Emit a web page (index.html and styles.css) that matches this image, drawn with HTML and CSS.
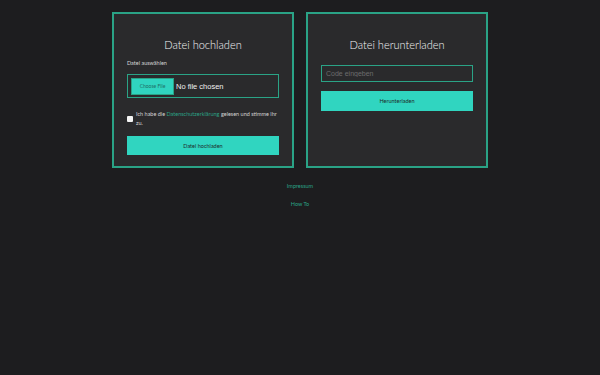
FILE: index.html
```html
<!DOCTYPE html>
<html lang="de">
<head>
<meta charset="utf-8">
<title>Datei teilen</title>
<link rel="stylesheet" href="styles.css">
</head>
<body>
<main class="page">
  <div class="cards">
    <section class="card">
      <h2 class="card-title">Datei hochladen</h2>
      <label class="field-label" for="file">Datei auswählen</label>
      <div class="file-box">
        <input class="file-input" id="file" type="file">
      </div>
      <div class="consent">
        <input class="check" type="checkbox" id="consent">
        <label for="consent">Ich habe die <a href="#" class="link">Datenschutzerklärung</a> gelesen und stimme ihr zu.</label>
      </div>
      <button class="btn btn-upload">Datei hochladen</button>
    </section>
    <section class="card">
      <h2 class="card-title">Datei herunterladen</h2>
      <input class="code-input" type="text" placeholder="Code eingeben">
      <button class="btn btn-download">Herunterladen</button>
    </section>
  </div>
  <nav class="footer">
    <a href="#" class="footer-link">Impressum</a>
    <a href="#" class="footer-link">How To</a>
  </nav>
</main>
</body>
</html>
```

FILE: styles.css
```css
* { box-sizing: border-box; }
html, body { margin: 0; padding: 0; }
body {
  background: #1d1d1f;
  font-family: "Lato", "Noto Sans", sans-serif;
  color: #e4e4e4;
  width: 600px;
  height: 375px;
}
.page {
  display: flex;
  flex-direction: column;
  align-items: center;
  padding-top: 12px;
}
.cards {
  display: flex;
  gap: 12px;
  align-items: stretch;
}
.card {
  width: 182px;
  background: #2a2a2c;
  border: 2px solid #2aa386;
  padding: 24px 13px 11px;
  display: flex;
  flex-direction: column;
}
.card-title {
  margin: 0;
  font-size: 11px;
  line-height: 14px;
  font-weight: 300;
  text-align: center;
  color: #f4f4f4;
}
.field-label {
  margin-top: 7px;
  font-size: 5.5px;
  line-height: 8px;
  color: #d4d4d4;
}
.file-box {
  margin-top: 7px;
  height: 24px;
  border: 1.5px solid #2aa386;
  display: flex;
  align-items: center;
  padding-left: 3px;
}
.file-input {
  font-family: "Liberation Sans", Arial, sans-serif;
  font-size: 7.5px;
  color: #f0f0f0;
  width: 100%;
}
.file-input::file-selector-button {
  background: #30d5c0;
  border: 1px solid #2aa386;
  color: #1f6f66;
  font-family: "Lato", sans-serif;
  font-size: 5px;
  height: 17px;
  width: 43px;
  padding: 0;
  margin-right: 2px;
}
.consent {
  margin-top: 12px;
  display: flex;
  align-items: center;
  gap: 3px;
  font-size: 5.5px;
  line-height: 9px;
  color: #d4d4d4;
}
.check {
  appearance: none;
  -webkit-appearance: none;
  margin: 0;
  width: 6px;
  height: 6px;
  flex: none;
  background: #f4f4f4;
  border-radius: 1px;
  border: none;
}
.link { color: #2aa386; text-decoration: none; }
.btn {
  border: none;
  background: #30d5c0;
  color: #1e2a2a;
  font-family: "Lato", sans-serif;
  font-size: 5.5px;
  padding: 0;
  width: 100%;
}
.btn-upload { margin-top: 8px; height: 19px; }
.code-input {
  margin-top: 13px;
  height: 17px;
  border: 1.5px solid #2aa386;
  background: #2a2a2c;
  font-family: "Liberation Sans", Arial, sans-serif;
  font-size: 7px;
  color: #ddd;
  padding: 0 4px;
}
.code-input::placeholder { color: #6c6c6c; }
.btn-download { margin-top: 9px; height: 20px; }
.footer {
  margin-top: 14px;
  display: flex;
  flex-direction: column;
  align-items: center;
  gap: 10px;
}
.footer-link {
  color: #2aa386;
  text-decoration: none;
  font-size: 5.5px;
  line-height: 8px;
}
```
